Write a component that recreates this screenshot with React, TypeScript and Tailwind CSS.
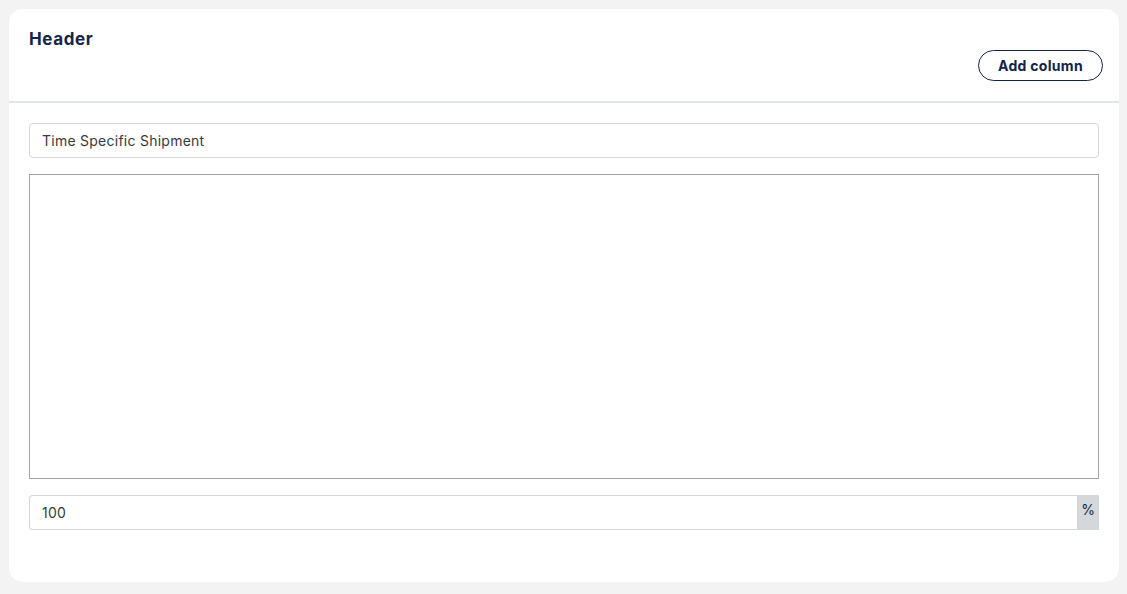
export default function App() {
  return (
    <div className="min-h-screen bg-[#f3f3f3] p-[9px] font-['Inter',sans-serif]">
      <div className="bg-white rounded-[14px] w-[1110px] h-[573px]">
        <div className="flex justify-between items-start h-[94px] pl-5 pr-4 pt-[18px] border-b-2 border-[#e3e6e6]">
          <h2 className="text-[17px] leading-6 font-bold text-[#13244a] tracking-[0.6px]">Header</h2>
          <button className="mt-[23px] h-[31px] w-[125px] rounded-full border border-[#13244a] text-[14px] font-bold text-[#13244a] tracking-[0.3px]">
            Add column
          </button>
        </div>
        <div className="flex flex-col gap-4 px-5 pt-5">
          <input
            defaultValue="Time Specific Shipment"
            className="h-[35px] w-full rounded-[4px] border border-[#d3d6da] px-3 text-[14px] text-[#3a3a3a] tracking-[0.25px] outline-none"
          />
          <textarea className="h-[305px] w-full border border-[#a3a3a3] resize-none outline-none" />
          <div className="flex h-[35px]">
            <input
              defaultValue="100"
              className="flex-1 rounded-l-[4px] border border-r-0 border-[#d3d6da] px-3 text-[14px] text-[#3a3a3a] tracking-[0.25px] outline-none"
            />
            <span className="w-[22px] bg-[#d4d8da] pt-[4px] text-center text-[14px] text-[#13244a]">%</span>
          </div>
        </div>
      </div>
    </div>
  );
}
